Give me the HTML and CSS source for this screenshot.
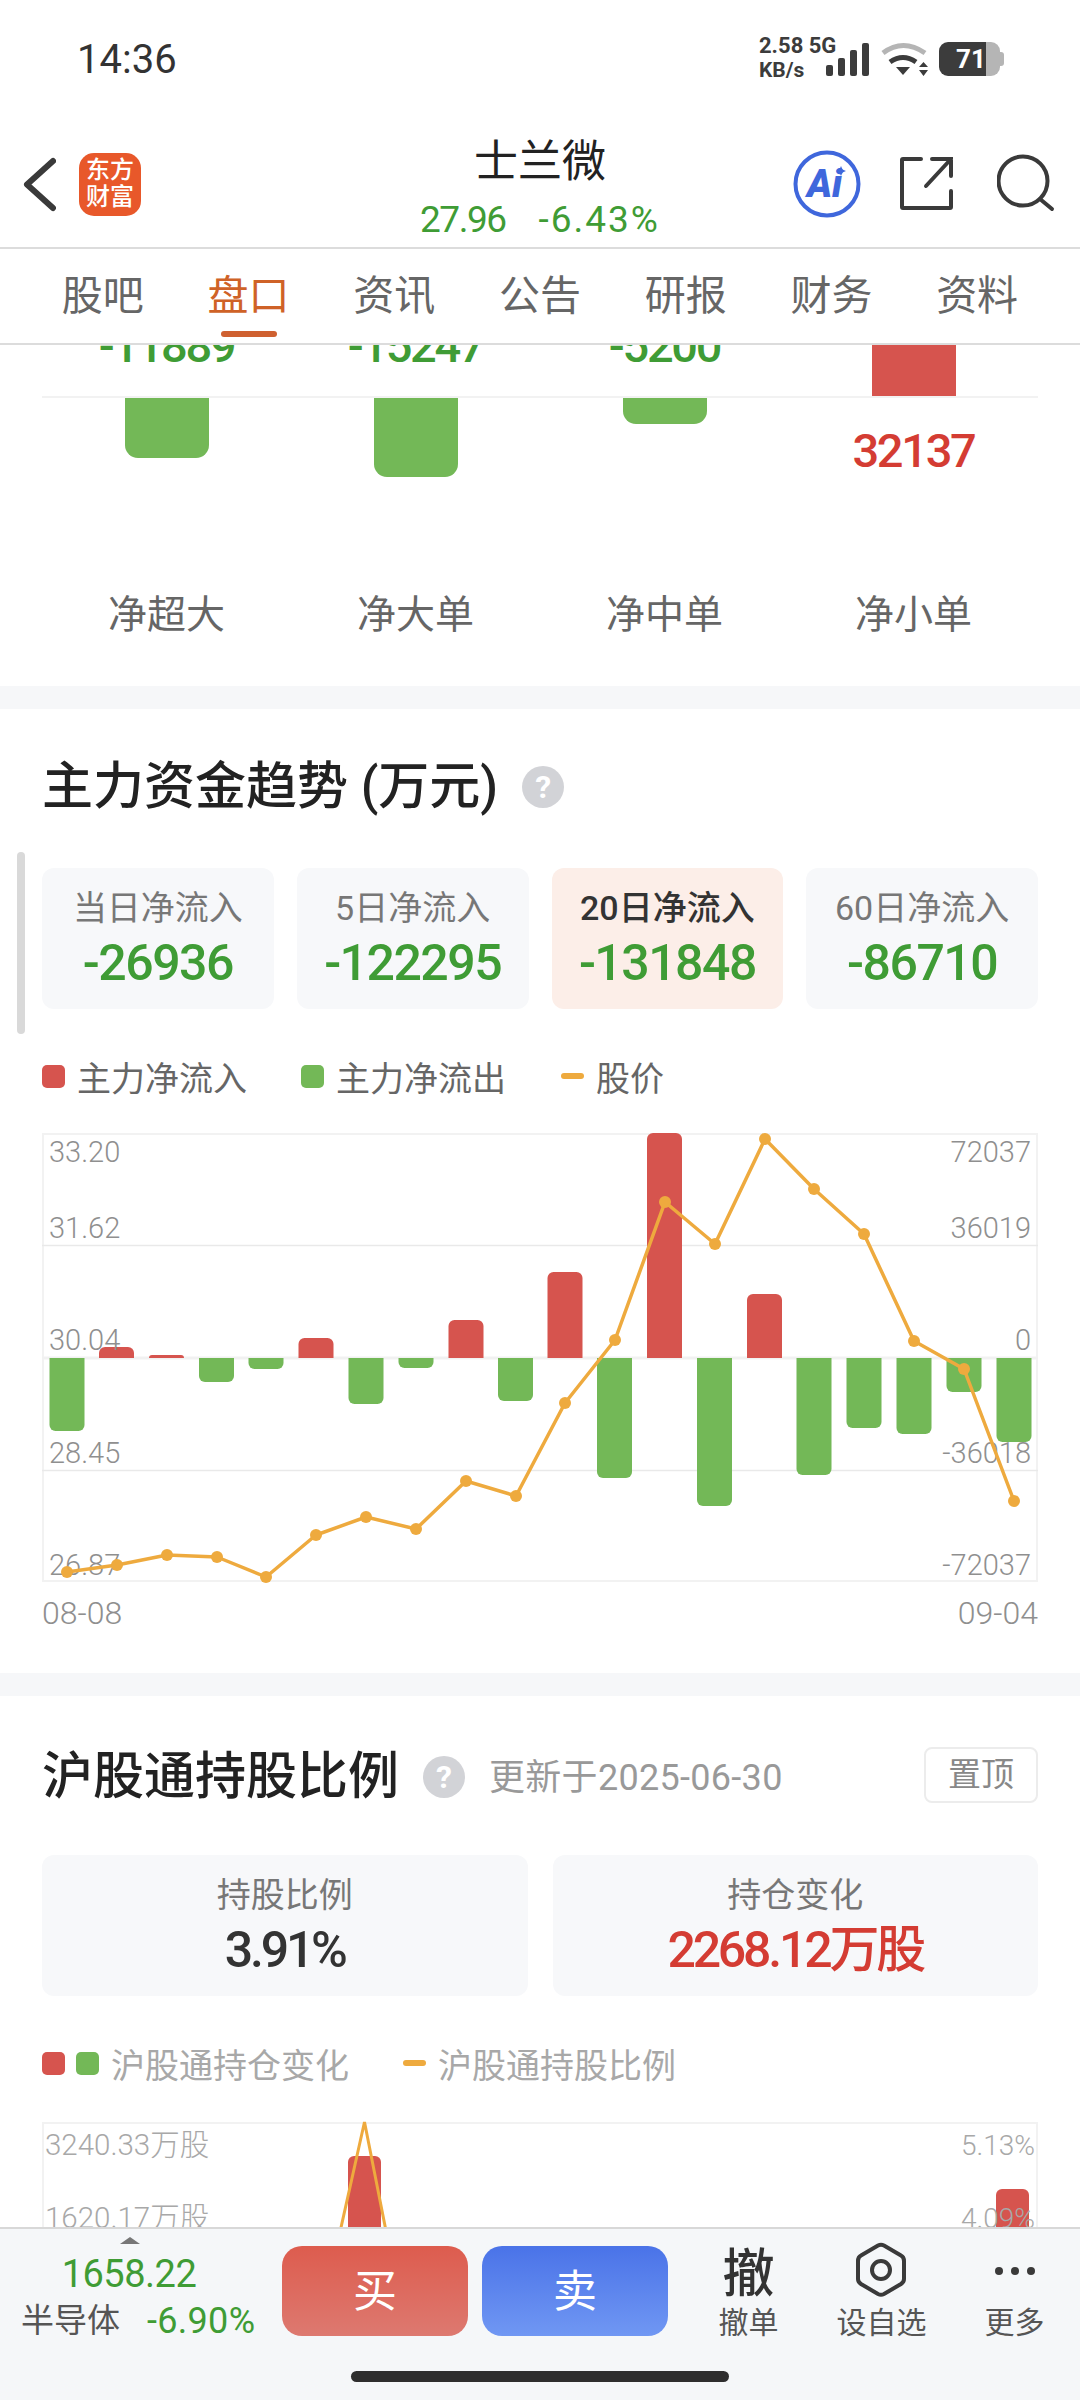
FILE: index.html
```html
<!DOCTYPE html>
<html lang="zh-CN">
<head>
    <meta charset="UTF-8">
    <meta name="viewport" content="width=device-width, initial-scale=1.0">
    <title>士兰微</title>
    <link rel="stylesheet" href="styles.css">
</head>
<body>
<div class="phone">

    <div class="status">
        <span class="time">14:36</span>
        <div class="status-right">
            <div class="speed"><span>2.58 5G</span><span class="speed-unit">KB/s</span></div>
            <svg class="status-icons" width="104" height="36" viewBox="826 41 104 36">
                <g fill="#3c3c3c">
                    <rect x="826" y="65" width="7" height="11" rx="2"/>
                    <rect x="838" y="58" width="7" height="18" rx="2"/>
                    <rect x="850" y="50" width="7" height="26" rx="2"/>
                    <rect x="862" y="43" width="7" height="33" rx="2"/>
                    <path d="M896 67h14l-7 8z"/>
                    <path d="M919 67l4.500-5 4.500 5zM919 70h9l-4.500 6z"/>
                </g>
                <path d="M883 53q20-15 42 0" fill="none" stroke="#b5b5b5" stroke-width="5"/>
                <path d="M890 62q13-9 26 0" fill="none" stroke="#3c3c3c" stroke-width="5"/>
            </svg>
            <div class="battery">71</div>
        </div>
    </div>

    <div class="topbar">
        <div class="topbar-left">
            <svg width="34" height="56" viewBox="22 156 34 56">
                <path d="M53 161L27 184.500L53 208" fill="none" stroke="#3a3a3a" stroke-width="6" stroke-linecap="round" stroke-linejoin="round"/>
            </svg>
            <div class="logo">东方<br>财富</div>
        </div>
        <div class="stock-title">
            <div class="stock-name">士兰微</div>
            <div class="stock-price"><span>27.96</span><span class="stock-pct">-6.43%</span></div>
        </div>
        <div class="topbar-right">
            <svg width="70" height="70" viewBox="791 149 70 70">
                <circle cx="826" cy="184" r="31.500" fill="none" stroke="#3f67dc" stroke-width="4"/>
                <text class="ai-text" x="806" y="197">Ai</text>
                <path d="M840 166l1.500 3.500 3.500 1.500-3.500 1.500-1.500 3.500-1.500-3.500-3.500-1.500 3.500-1.500z" fill="#3f67dc"/>
            </svg>
            <svg width="56" height="56" viewBox="898 155 56 56">
                <path d="M920 159H902a1 1 0 0 0-1 1V207a1 1 0 0 0 1 1H949a1 1 0 0 0 1-1V191" fill="none" stroke="#3a3a3a" stroke-width="4" stroke-linecap="round"/>
                <path d="M925 186L950 159M931 159H950V176" fill="none" stroke="#3a3a3a" stroke-width="4" stroke-linecap="round"/>
            </svg>
            <svg width="58" height="58" viewBox="996 154 58 58">
                <circle cx="1022" cy="181" r="24.500" fill="none" stroke="#3a3a3a" stroke-width="4"/>
                <path d="M1039 199L1051 209" fill="none" stroke="#3a3a3a" stroke-width="4" stroke-linecap="round"/>
            </svg>
        </div>
    </div>

    <div class="tabs">
        <span class="tab">股吧</span>
        <span class="tab active">盘口</span>
        <span class="tab">资讯</span>
        <span class="tab">公告</span>
        <span class="tab">研报</span>
        <span class="tab">财务</span>
        <span class="tab">资料</span>
    </div>

    <div class="content">

        <section class="section net">
            <div class="net-grid">
                <div class="net-col">
                    <div class="net-top"><span class="net-num green">-11889</span></div>
                    <div class="net-bottom"><div class="net-bar down bar-a"></div></div>
                    <div class="net-label">净超大</div>
                </div>
                <div class="net-col">
                    <div class="net-top"><span class="net-num green">-15247</span></div>
                    <div class="net-bottom"><div class="net-bar down bar-b"></div></div>
                    <div class="net-label">净大单</div>
                </div>
                <div class="net-col">
                    <div class="net-top"><span class="net-num green">-5200</span></div>
                    <div class="net-bottom"><div class="net-bar down bar-c"></div></div>
                    <div class="net-label">净中单</div>
                </div>
                <div class="net-col">
                    <div class="net-top no-pad"><div class="net-bar up"></div></div>
                    <div class="net-bottom"><span class="net-num red">32137</span></div>
                    <div class="net-label">净小单</div>
                </div>
            </div>
        </section>

        <section class="section trend">
            <div class="scroll-thumb"></div>
            <div class="title-row">
                <h2>主力资金趋势 (万元)</h2>
                <span class="help">?</span>
            </div>
            <div class="cards four">
                <div class="card"><div class="card-label">当日净流入</div><div class="card-value green">-26936</div></div>
                <div class="card"><div class="card-label">5日净流入</div><div class="card-value green">-122295</div></div>
                <div class="card selected"><div class="card-label">20日净流入</div><div class="card-value green">-131848</div></div>
                <div class="card"><div class="card-label">60日净流入</div><div class="card-value green">-86710</div></div>
            </div>
            <div class="legend">
                <span class="key key-red"></span><span class="legend-text">主力净流入</span>
                <span class="key key-green gap-a"></span><span class="legend-text">主力净流出</span>
                <span class="key-line gap-b"></span><span class="legend-text">股价</span>
            </div>

            <svg class="chart" width="996" height="449" viewBox="42 1133 996 449">
                <defs>
                    <clipPath id="above"><rect x="42" y="1120" width="996" height="238"/></clipPath>
                    <clipPath id="below"><rect x="42" y="1358" width="996" height="224"/></clipPath>
                </defs>
                <rect x="43" y="1134" width="994" height="447" fill="none" stroke="#f2f2f2" stroke-width="2"/>
                <path d="M42 1245.500H1038M42 1470.500H1038" stroke="#e9e9e9" stroke-width="1.500"/>
                <path d="M42 1358H1038" stroke="#f1f1f1" stroke-width="3"/>

                <g clip-path="url(#above)" fill="#d6544e">
                    <rect x="99" y="1347" width="35" height="30" rx="6"/>
                    <rect x="149" y="1355" width="35" height="20" rx="3"/>
                    <rect x="298.500" y="1338" width="35" height="40" rx="6"/>
                    <rect x="448.500" y="1320" width="35" height="60" rx="6"/>
                    <rect x="547.500" y="1272" width="35" height="110" rx="6"/>
                    <rect x="647" y="1133" width="35" height="250" rx="6"/>
                    <rect x="747" y="1294" width="35" height="90" rx="6"/>
                </g>
                <g clip-path="url(#below)" fill="#73b857">
                    <rect x="49.500" y="1340" width="35" height="91" rx="6"/>
                    <rect x="199" y="1340" width="35" height="42" rx="6"/>
                    <rect x="248.500" y="1340" width="35" height="29" rx="6"/>
                    <rect x="348.500" y="1340" width="35" height="64" rx="6"/>
                    <rect x="398.500" y="1340" width="35" height="28" rx="6"/>
                    <rect x="498" y="1340" width="35" height="61" rx="6"/>
                    <rect x="597" y="1340" width="35" height="138" rx="6"/>
                    <rect x="697" y="1340" width="35" height="166" rx="6"/>
                    <rect x="796.500" y="1340" width="35" height="135" rx="6"/>
                    <rect x="846.500" y="1340" width="35" height="88" rx="6"/>
                    <rect x="896.500" y="1340" width="35" height="94" rx="6"/>
                    <rect x="946.500" y="1340" width="35" height="52" rx="6"/>
                    <rect x="996.500" y="1340" width="35" height="102" rx="6"/>
                </g>

                <g class="axis">
                    <text x="49" y="1162">33.20</text>
                    <text x="49" y="1238">31.62</text>
                    <text x="49" y="1350">30.04</text>
                    <text x="49" y="1463">28.45</text>
                    <text x="49" y="1575">26.87</text>
                </g>
                <g class="axis axis-end">
                    <text x="1031" y="1162">72037</text>
                    <text x="1031" y="1238">36019</text>
                    <text x="1031" y="1350">0</text>
                    <text x="1031" y="1463">-36018</text>
                    <text x="1031" y="1575">-72037</text>
                </g>

                <polyline points="67,1572 117,1565 167,1555 217,1557 266,1577 316,1535 366,1517 416,1529 466,1481 516,1496 565,1403 615,1340 665,1202 715,1244 765,1139 814,1189 864,1234 914,1341 964,1369 1014,1501" fill="none" stroke="#eeaa3e" stroke-width="3.500" stroke-linejoin="round"/>
                <g fill="#eeaa3e">
                    <circle cx="67" cy="1572" r="6"/><circle cx="117" cy="1565" r="6"/><circle cx="167" cy="1555" r="6"/>
                    <circle cx="217" cy="1557" r="6"/><circle cx="266" cy="1577" r="6"/><circle cx="316" cy="1535" r="6"/>
                    <circle cx="366" cy="1517" r="6"/><circle cx="416" cy="1529" r="6"/><circle cx="466" cy="1481" r="6"/>
                    <circle cx="516" cy="1496" r="6"/><circle cx="565" cy="1403" r="6"/><circle cx="615" cy="1340" r="6"/>
                    <circle cx="665" cy="1202" r="6"/><circle cx="715" cy="1244" r="6"/><circle cx="765" cy="1139" r="6"/>
                    <circle cx="814" cy="1189" r="6"/><circle cx="864" cy="1234" r="6"/><circle cx="914" cy="1341" r="6"/>
                    <circle cx="964" cy="1369" r="6"/><circle cx="1014" cy="1501" r="6"/>
                </g>
            </svg>
            <div class="dates"><span>08-08</span><span>09-04</span></div>
        </section>

        <section class="section holding">
            <div class="title-row spread">
                <h2>沪股通持股比例</h2>
                <span class="help">?</span>
                <span class="updated">更新于2025-06-30</span>
                <span class="pin">置顶</span>
            </div>
            <div class="cards two">
                <div class="card"><div class="card-label">持股比例</div><div class="card-value dark">3.91%</div></div>
                <div class="card"><div class="card-label">持仓变化</div><div class="card-value red">2268.12万股</div></div>
            </div>
            <div class="legend light">
                <span class="key key-red"></span><span class="key key-green gap-c"></span><span class="legend-text">沪股通持仓变化</span>
                <span class="key-line gap-d"></span><span class="legend-text">沪股通持股比例</span>
            </div>
            <svg class="chart" width="996" height="300" viewBox="42 2121 996 300">
                <rect x="43" y="2122" width="994" height="298" fill="none" stroke="#f2f2f2" stroke-width="2"/>
                <rect x="348" y="2155" width="33" height="120" rx="6" fill="#d6544e"/>
                <rect x="996" y="2188" width="33" height="100" rx="6" fill="#d6544e"/>
                <g class="axis small wide">
                    <text x="45" y="2154">3240.33万股</text>
                    <text x="45" y="2227">1620.17万股</text>
                </g>
                <g class="axis small axis-end">
                    <text x="1035" y="2154">5.13%</text>
                    <text x="1035" y="2227">4.09%</text>
                </g>
                <path d="M338 2240L364.500 2121L388 2240" fill="none" stroke="#eeaa3e" stroke-width="3"/>
            </svg>
        </section>
    </div>

    <div class="bottombar">
        <div class="index">
            <div class="index-arrow"></div>
            <div class="index-price">1658.22</div>
            <div class="index-row"><span>半导体</span><span class="green">-6.90%</span></div>
        </div>
        <div class="trade buy">买</div>
        <div class="trade sell">卖</div>
        <div class="actions">
            <div class="action">
                <div class="action-icon chars">撤</div>
                <div class="action-label">撤单</div>
            </div>
            <div class="action">
                <div class="action-icon">
                    <svg class="hex" width="52" height="58" viewBox="854 2238 52 58">
                        <path d="M877 2242.500Q880 2241 883 2242.500L900 2252.500Q903 2254 903 2258V2276Q903 2279 900 2281L883 2291Q880 2292.500 877 2291L860 2281Q857 2279 857 2276V2258Q857 2254 860 2252.500Z" fill="none" stroke="#3a3a3a" stroke-width="4"/>
                        <circle cx="880" cy="2267" r="9" fill="none" stroke="#3a3a3a" stroke-width="4"/>
                    </svg>
                </div>
                <div class="action-label">设自选</div>
            </div>
            <div class="action">
                <div class="action-icon">
                    <svg width="44" height="10" viewBox="0 0 44 10">
                        <circle cx="6" cy="5" r="4" fill="#3a3a3a"/>
                        <circle cx="22" cy="5" r="4" fill="#3a3a3a"/>
                        <circle cx="38" cy="5" r="4" fill="#3a3a3a"/>
                    </svg>
                </div>
                <div class="action-label">更多</div>
            </div>
        </div>
        <div class="home-bar"></div>
    </div>

</div>
</body>
</html>
```

FILE: styles.css
```css
/* page */
body {
    margin: 0;
    font-family: Roboto, "Noto Sans CJK SC", sans-serif;
    background-color: #fff;
    color: #333;
}

.phone {
    width: 1080px;
    height: 2400px;
    display: flex;
    flex-direction: column;
    overflow: hidden;
    position: relative;
}

.green { color: #3f9c35; }
.red { color: #d43c33; }
.dark { color: #333; }

/* status bar */
.status {
    height: 130px;
    flex-shrink: 0;
    box-sizing: border-box;
    padding: 36px 80px 0 77px;
    display: flex;
    justify-content: space-between;
    align-items: flex-start;
}

.time {
    font-size: 40px;
    line-height: 48px;
    color: #333;
}

.status-right {
    display: flex;
    align-items: flex-start;
}

.speed {
    display: flex;
    flex-direction: column;
    margin-top: -2px;
    font-size: 22px;
    font-weight: 700;
    line-height: 24px;
    width: 67px;
    white-space: nowrap;
    color: #3c3c3c;
}

.speed-unit { font-size: 21px; }

.status-icons { margin-top: 5px; }

.battery {
    position: relative;
    width: 61px;
    height: 34px;
    margin: 6px 0 0 9px;
    border-radius: 9px;
    background: linear-gradient(90deg, #3c3c3c 77%, #b5b5b5 77%);
    color: #fff;
    font-size: 26px;
    font-weight: 700;
    line-height: 34px;
    box-sizing: border-box;
    padding-left: 17px;
}

.battery::after {
    content: "";
    position: absolute;
    right: -4px;
    top: 10px;
    width: 4px;
    height: 14px;
    border-radius: 0 3px 3px 0;
    background-color: #b5b5b5;
}

/* top bar */
.topbar {
    height: 119px;
    flex-shrink: 0;
    box-sizing: border-box;
    border-bottom: 2px solid #dcdcdc;
    display: grid;
    grid-template-columns: 1fr auto 1fr;
}

.topbar-left {
    display: flex;
    align-items: flex-start;
    padding: 26px 0 0 22px;
}

.logo {
    width: 62px;
    height: 63px;
    margin: -3px 0 0 23px;
    border-radius: 15px;
    background-color: #e8582a;
    color: #fff;
    font-size: 24px;
    font-weight: 500;
    line-height: 27px;
    text-align: center;
    box-sizing: border-box;
    padding-top: 4px;
}

.stock-title {
    text-align: center;
    padding-top: 2px;
}

.stock-name {
    font-size: 44px;
    line-height: 60px;
    color: #222;
}

.stock-price {
    display: flex;
    justify-content: center;
    gap: 33px;
    font-size: 37px;
    line-height: 56px;
    letter-spacing: -1.500px;
    color: #3f9c35;
}

.stock-pct { letter-spacing: 2px; }

.topbar-right {
    display: flex;
    justify-content: flex-end;
    align-items: flex-start;
    padding: 19px 25px 0 0;
}

.topbar-right svg:nth-child(2) { margin: 6px 0 0 37px; }
.topbar-right svg:nth-child(3) { margin: 5px 0 0 42px; }

/* tabs */
.tabs {
    height: 96px;
    flex-shrink: 0;
    box-sizing: border-box;
    padding: 0 30px;
    border-bottom: 2px solid #dcdcdc;
    display: grid;
    grid-template-columns: repeat(7, 1fr);
}

.tab {
    position: relative;
    padding-top: 2px;
    text-align: center;
    font-size: 41px;
    line-height: 90px;
    color: #666;
}

.tab.active { color: #cf6227; }

.tab.active::after {
    content: "";
    position: absolute;
    left: 50%;
    bottom: 6px;
    width: 56px;
    height: 6px;
    margin-left: -28px;
    border-radius: 3px;
    background-color: #cf6030;
}

/* scrolled content */
.content {
    flex: 1;
    overflow: hidden;
    background-color: #f6f7f9;
}

.section {
    position: relative;
    background-color: #fff;
    padding: 0 42px;
    margin-bottom: 23px;
}

.net { height: 341px; }

.net-grid {
    display: grid;
    grid-template-columns: repeat(4, 1fr);
}

.net-col {
    display: flex;
    flex-direction: column;
    align-items: center;
    position: relative;
}

.net-col::before {
    content: "";
    order: 1;
    width: 100%;
    height: 2px;
    margin-top: -1px;
    background-color: #f2f2f2;
}

.net-top {
    order: 0;
    width: 100%;
    height: 52px;
    box-sizing: border-box;
    padding-bottom: 26px;
    display: flex;
    justify-content: center;
    align-items: flex-end;
    overflow: hidden;
}

.net-top.no-pad { padding-bottom: 0; }

.net-bottom {
    order: 2;
    width: 100%;
    height: 176px;
    display: flex;
    justify-content: center;
    align-items: flex-start;
}

.net-label {
    order: 3;
    font-size: 39px;
    line-height: 50px;
    margin-top: 16px;
    color: #666;
}

.net-num {
    font-size: 47px;
    font-weight: 500;
    line-height: 50px;
    letter-spacing: -2.300px;
    white-space: nowrap;
}

.net-bottom .net-num { margin-top: 28px; }

.net-bar {
    width: 84px;
    background-color: #73b857;
}

.net-bar.down { border-radius: 0 0 13px 13px; }
.bar-a { height: 60px; }
.bar-b { height: 79px; }
.bar-c { height: 26px; }

.net-bar.up {
    height: 52px;
    background-color: #d6544e;
}

/* section titles */
.trend {
    padding-top: 48px;
    padding-bottom: 42px;
}

.holding { padding-top: 51px; }

.scroll-thumb {
    position: absolute;
    left: 17px;
    top: 143px;
    width: 8px;
    height: 182px;
    border-radius: 4px;
    background-color: #d9d9d9;
}

.title-row {
    display: flex;
    align-items: center;
    height: 60px;
}

.title-row h2 {
    margin: 0;
    font-size: 51px;
    font-weight: 500;
    line-height: 60px;
    color: #222;
    white-space: nowrap;
}

.help {
    width: 42px;
    height: 42px;
    margin-left: 24px;
    border-radius: 50%;
    background-color: #d2d3d7;
    color: #fff;
    font-size: 32px;
    font-weight: 700;
    line-height: 42px;
    text-align: center;
}

.updated {
    margin: -6px 0 0 24px;
    font-size: 36px;
    letter-spacing: 0.300px;
    color: #999;
    white-space: nowrap;
}

.pin {
    margin: -5px 0 0 auto;
    width: 114px;
    height: 56px;
    box-sizing: border-box;
    border: 2px solid #ececec;
    border-radius: 8px;
    font-size: 33px;
    line-height: 52px;
    text-align: center;
    color: #888;
}

/* stat cards */
.cards {
    display: grid;
    gap: 23px;
    margin-top: 51px;
}

.cards.four { grid-template-columns: repeat(4, 1fr); }
.cards.two { grid-template-columns: repeat(2, 1fr); gap: 25px; margin-top: 48px; }

.card {
    height: 141px;
    border-radius: 12px;
    background-color: #f7f8fa;
    text-align: center;
    box-sizing: border-box;
    padding-top: 18px;
}

.card.selected { background-color: #fceee8; }
.card.selected .card-label { color: #333; font-weight: 500; }

.card-label {
    font-size: 34px;
    line-height: 44px;
    color: #777;
}

.card-value {
    font-size: 50px;
    font-weight: 500;
    line-height: 60px;
    margin-top: 3px;
    letter-spacing: -1.500px;
}

.holding .card-value { letter-spacing: -3.200px; }

/* legend */
.legend {
    display: flex;
    align-items: center;
    height: 40px;
    margin-top: 47px;
}

.legend-text {
    margin-left: 12px;
    font-size: 34px;
    color: #666;
    white-space: nowrap;
}

.legend.light .legend-text { color: #a8a8a8; }

.key {
    width: 23px;
    height: 23px;
    border-radius: 5px;
}

.key-red { background-color: #d6544e; }
.key-green { background-color: #73b857; }

.key-line {
    width: 23px;
    height: 6px;
    border-radius: 3px;
    background-color: #eeaa3e;
}

.gap-a { margin-left: 54px; }
.gap-b { margin-left: 55px; }
.gap-c { margin-left: 11px; }
.gap-d { margin-left: 54px; }

/* charts */
.chart {
    display: block;
    margin-top: 37px;
    overflow: visible;
}

.holding .chart { margin-top: 39px; }

.axis text {
    font-size: 29px;
    font-weight: 300;
    fill: #8f8f8f;
}

.axis-end text { text-anchor: end; }

.axis.small text {
    font-size: 28px;
    fill: #a8a8a8;
}

.axis.small.wide text { font-size: 29.500px; }

.ai-text {
    font-size: 38px;
    font-weight: 900;
    font-style: italic;
    fill: #3f67dc;
}

.dates {
    display: flex;
    justify-content: space-between;
    margin-top: 13px;
    font-size: 32px;
    font-weight: 300;
    line-height: 36px;
    color: #8f8f8f;
}

/* bottom bar */
.bottombar {
    height: 173px;
    flex-shrink: 0;
    box-sizing: border-box;
    border-top: 2px solid #d8d8d8;
    background-color: #f5f7f9;
    display: flex;
    align-items: flex-start;
    position: relative;
}

.index {
    width: 282px;
    flex-shrink: 0;
    box-sizing: border-box;
    padding: 8px 0 0 21px;
}

.index-arrow {
    width: 0;
    height: 0;
    margin-left: 99px;
    border-left: 10px solid transparent;
    border-right: 10px solid transparent;
    border-bottom: 7px solid #777;
}

.index-price {
    margin-left: -21px;
    width: 258px;
    text-align: center;
    font-size: 38px;
    line-height: 48px;
    margin-top: 6px;
    letter-spacing: -0.500px;
    color: #3f9c35;
}

.index-row {
    display: flex;
    gap: 27px;
    font-size: 33px;
    line-height: 44px;
    margin-top: 1px;
    color: #555;
    white-space: nowrap;
}

.index-row .green {
    font-size: 36px;
    letter-spacing: 0.300px;
}

.trade {
    width: 186px;
    height: 90px;
    margin-top: 17px;
    border-radius: 20px;
    color: #fff;
    font-size: 44px;
    line-height: 92px;
    text-align: center;
    flex-shrink: 0;
}

.buy { background: linear-gradient(180deg, #dd5c4e, #dd7970); }

.sell {
    margin-left: 14px;
    background: linear-gradient(180deg, #4a73e8, #7097f3);
}

.actions {
    display: flex;
    margin-left: 14px;
}

.action {
    width: 133px;
    display: flex;
    flex-direction: column;
    align-items: center;
}

.action-icon {
    height: 64px;
    margin-top: 10px;
    display: flex;
    align-items: center;
    justify-content: center;
}

.action-icon.chars {
    height: 61px;
    margin-bottom: 3px;
    font-size: 52px;
    font-weight: 500;
    color: #333;
}

.hex { margin: -3px 0 0 -2px; }

.action-label {
    font-size: 30px;
    line-height: 36px;
    margin-top: 2px;
    color: #555;
}

.home-bar {
    position: absolute;
    left: 351px;
    bottom: 18px;
    width: 378px;
    height: 11px;
    border-radius: 6px;
    background-color: #2e2e2e;
}
```
